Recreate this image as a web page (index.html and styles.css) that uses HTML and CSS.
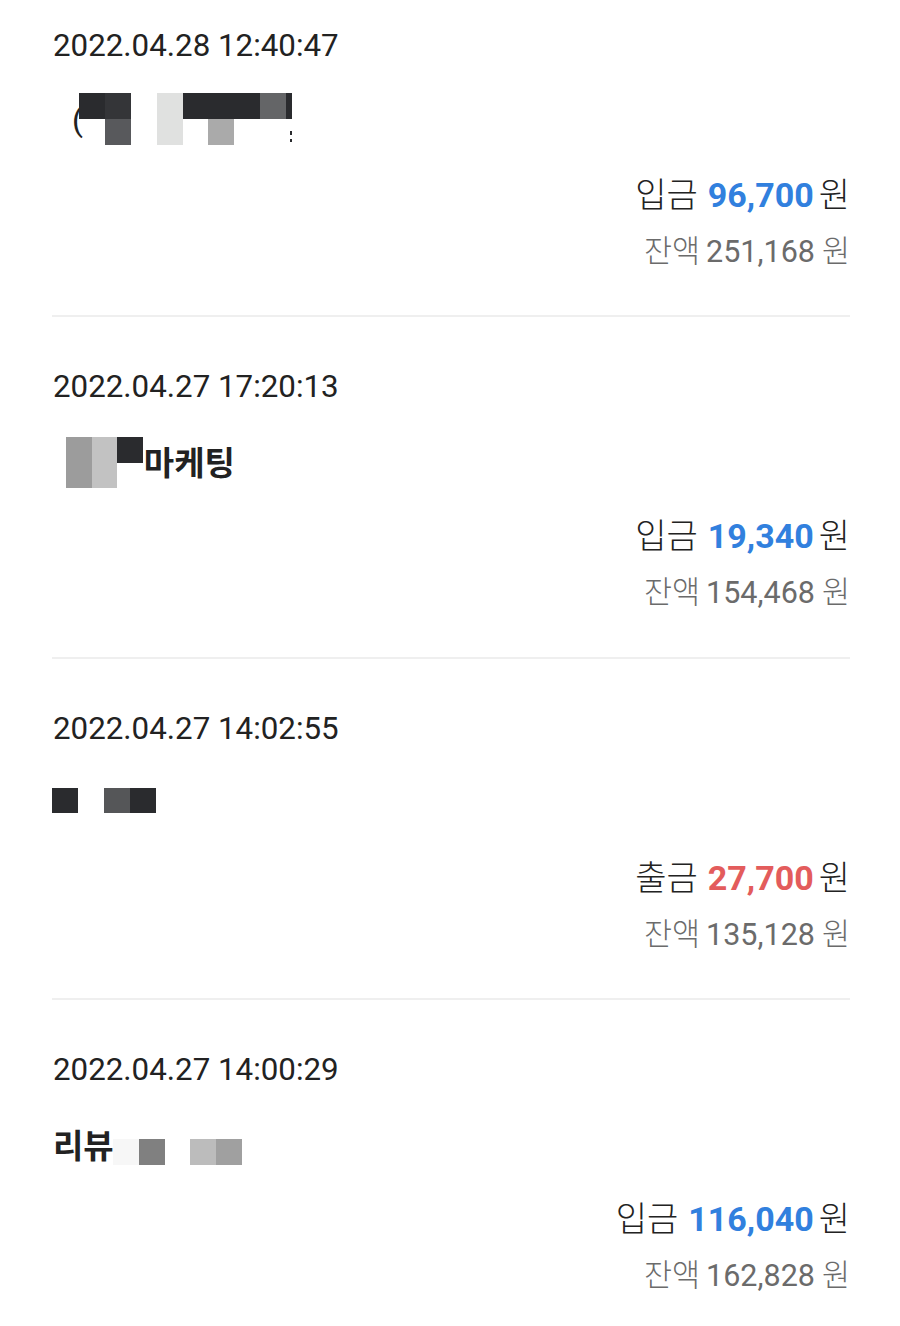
FILE: index.html
```html
<!DOCTYPE html>
<html lang="ko">
<head>
<meta charset="utf-8">
<title>거래내역</title>
<link rel="stylesheet" href="styles.css">
</head>
<body>
<main class="list">
  <section class="item">
    <div class="date">2022.04.28 12:40:47</div>
    <div class="name">
      <span class="paren">(</span>
      <div class="mosaic mosaic-a">
        <i class="k1"></i><i class="w"></i>
        <i class="k2"></i><i class="k4"></i>
        <i class="w"></i><i class="w"></i>
        <i class="l1"></i><i class="l1"></i>
        <i class="k1"></i><i class="w"></i>
        <i class="k1"></i><i class="g2"></i>
        <i class="k1"></i><i class="w"></i>
        <i class="g1"></i><i class="w"></i>
        <i class="k1 narrow"></i><i class="w narrow dots"></i>
      </div>
    </div>
    <div class="amount"><span class="label">입금</span><span class="num in">96,700</span><span class="unit">원</span></div>
    <div class="balance"><span class="label">잔액</span><span class="num">251,168</span><span class="unit">원</span></div>
  </section>

  <section class="item">
    <div class="date">2022.04.27 17:20:13</div>
    <div class="name">
      <div class="mosaic mosaic-b">
        <i class="g3"></i><i class="g3"></i>
        <i class="l2"></i><i class="l2"></i>
        <i class="k1"></i><i class="w"></i>
      </div>
      <span class="title">마케팅</span>
    </div>
    <div class="amount"><span class="label">입금</span><span class="num in">19,340</span><span class="unit">원</span></div>
    <div class="balance"><span class="label">잔액</span><span class="num">154,468</span><span class="unit">원</span></div>
  </section>

  <section class="item">
    <div class="date">2022.04.27 14:02:55</div>
    <div class="name">
      <div class="mosaic mosaic-c">
        <i class="k1"></i><i class="w"></i><i class="k3"></i><i class="k1"></i>
      </div>
    </div>
    <div class="amount"><span class="label">출금</span><span class="num out">27,700</span><span class="unit">원</span></div>
    <div class="balance"><span class="label">잔액</span><span class="num">135,128</span><span class="unit">원</span></div>
  </section>

  <section class="item">
    <div class="date">2022.04.27 14:00:29</div>
    <div class="name">
      <span class="title">리뷰</span>
      <div class="mosaic mosaic-d">
        <i class="f1"></i><i class="g4"></i><i class="w"></i><i class="l3"></i><i class="g5"></i>
      </div>
    </div>
    <div class="amount"><span class="label">입금</span><span class="num in">116,040</span><span class="unit">원</span></div>
    <div class="balance"><span class="label">잔액</span><span class="num">162,828</span><span class="unit">원</span></div>
  </section>
</main>
</body>
</html>
```

FILE: styles.css
```css
html, body {
  margin: 0;
  padding: 0;
  background: #ffffff;
}

body {
  font-family: Roboto, "Noto Sans CJK KR", sans-serif;
  color: #222222;
}

.list {
  padding: 0 50px 0 52px;
}

.item {
  padding: 50px 0 43.3px 1px;
  border-bottom: 2px solid #efefef;
}

.item:first-child {
  padding-top: 26px;
}

.date {
  font-family: Roboto, sans-serif;
  font-size: 31.3px;
  line-height: 40px;
  color: #222222;
}

.name {
  margin-top: 31px;
  height: 46px;
  display: flex;
  align-items: flex-start;
}

.title {
  font-family: "Noto Sans CJK KR", sans-serif;
  font-weight: 700;
  font-size: 33px;
  line-height: 46px;
  color: #222222;
  flex: none;
}

.paren {
  font-family: Roboto, sans-serif;
  font-size: 32px;
  line-height: 46px;
  margin-left: 19px;
  color: #222222;
}

.mosaic {
  display: grid;
  grid-auto-flow: column;
  flex: none;
}

.mosaic i {
  display: block;
}

.mosaic-a {
  grid-template-rows: repeat(2, 26px);
  grid-template-columns: repeat(8, 25.9px) 6px;
  margin-top: -4px;
  margin-left: -4px;
}

.mosaic-b {
  grid-template-rows: repeat(2, 25.5px);
  grid-auto-columns: 25.6px;
  margin-top: -1px;
  margin-left: 13px;
  margin-right: 1px;
}

.mosaic-c {
  grid-template-rows: 25.7px;
  grid-auto-columns: 26px;
  margin-top: 8px;
  margin-left: -1px;
}

.mosaic-d {
  grid-template-rows: 26px;
  grid-auto-columns: 25.9px;
  margin-top: 18px;
  margin-left: -1px;
}

.k1 { background: #2a2b2e; }
.k2 { background: #343538; }
.k3 { background: #555658; }
.k4 { background: #58595c; }
.g1 { background: #646567; }
.g2 { background: #aaaaaa; }
.g3 { background: #9c9c9c; }
.g4 { background: #808080; }
.g5 { background: #a0a0a0; }
.l1 { background: #e0e1e0; }
.l2 { background: #c2c2c2; }
.l3 { background: #bcbcbc; }
.f1 { background: #f7f7f7; }
.w  { background: transparent; }

.dots {
  background:
    linear-gradient(#2a2b2e, #2a2b2e) 4px 12px / 2px 4px no-repeat,
    linear-gradient(#2a2b2e, #2a2b2e) 4px 20px / 2px 3px no-repeat;
}

.amount,
.balance {
  display: flex;
  justify-content: flex-end;
  align-items: baseline;
}

.amount {
  margin-top: 28px;
  font-size: 34px;
  line-height: 44px;
}

.balance {
  margin-top: 12px;
  font-size: 30.5px;
  line-height: 40px;
  color: #6b6b6b;
}

.label,
.unit {
  font-family: "Noto Sans CJK KR", sans-serif;
  font-weight: 300;
}

.amount .label { margin-right: 10px; color: #222222; }
.amount .unit { margin-left: 5px; color: #222222; }
.amount .num {
  font-family: Roboto, sans-serif;
  font-weight: 700;
}

.balance .label { margin-right: 6px; }
.balance .unit { margin-left: 7px; }
.balance .num {
  font-family: Roboto, sans-serif;
  font-weight: 400;
}

.in { color: #3180de; }
.out { color: #e35c5c; }
```
